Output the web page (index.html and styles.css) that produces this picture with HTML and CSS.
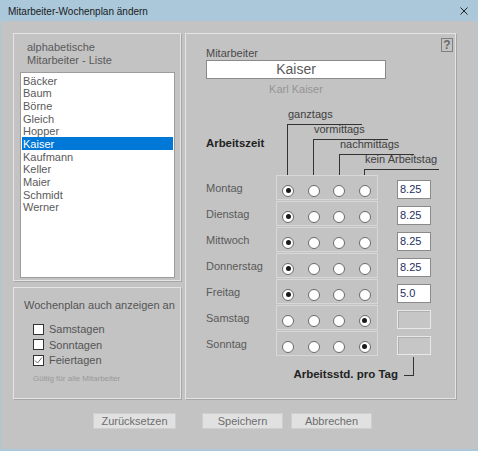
FILE: index.html
```html
<!DOCTYPE html>
<html lang="de">
<head>
<meta charset="utf-8">
<title>Mitarbeiter-Wochenplan ändern</title>
<link rel="stylesheet" href="styles.css">
</head>
<body>
<div class="window">
  <div class="titlebar">
    <span class="title">Mitarbeiter-Wochenplan ändern</span>
    <svg class="close" width="8" height="8" viewBox="0 0 8 8"><path d="M0.5 0.5L7.5 7.5M7.5 0.5L0.5 7.5" stroke="#222" stroke-width="1"/></svg>
  </div>
  <div class="client">
    <div class="main">
      <div class="leftcol">
        <div class="panel listpanel">
          <div class="listhead">alphabetische<br>Mitarbeiter - Liste</div>
          <ul class="list">
            <li>Bäcker</li>
            <li>Baum</li>
            <li>Börne</li>
            <li>Gleich</li>
            <li>Hopper</li>
            <li class="sel">Kaiser</li>
            <li>Kaufmann</li>
            <li>Keller</li>
            <li>Maier</li>
            <li>Schmidt</li>
            <li>Werner</li>
          </ul>
        </div>
        <div class="panel optpanel">
          <div class="opthead">Wochenplan auch anzeigen an</div>
          <div class="checks">
            <div class="check"><span class="box"></span><span>Samstagen</span></div>
            <div class="check"><span class="box"></span><span>Sonntagen</span></div>
            <div class="check"><span class="box checked"><svg width="9" height="9" viewBox="0 0 9 9"><path d="M1 4.5L3.5 7L8 1.5" fill="none" stroke="#6a6a6a" stroke-width="1"/></svg></span><span>Feiertagen</span></div>
          </div>
          <div class="note">Gültig für alle Mitarbeiter</div>
        </div>
      </div>
      <div class="panel rightpanel">
        <span class="help">?</span>
        <div class="emp">
          <div class="emplabel">Mitarbeiter</div>
          <div class="empbox">Kaiser</div>
          <div class="empname">Karl Kaiser</div>
        </div>
        <div class="sched">
          <div class="headrow">
            <div class="azlabel">Arbeitszeit</div>
            <div class="brackets">
              <div class="br b1"><span class="brtext">ganztags</span><span class="brline"></span></div>
              <div class="br b2"><span class="brtext">vormittags</span><span class="brline"></span></div>
              <div class="br b3"><span class="brtext">nachmittags</span><span class="brline"></span></div>
              <div class="br b4"><span class="brtext">kein Arbeitstag</span><span class="brline"></span></div>
            </div>
          </div>
          <div class="day"><span class="dname">Montag</span><span class="grp"><span class="rad on"></span><span class="rad"></span><span class="rad"></span><span class="rad"></span></span><span class="hrs">8.25</span></div>
          <div class="day"><span class="dname">Dienstag</span><span class="grp"><span class="rad on"></span><span class="rad"></span><span class="rad"></span><span class="rad"></span></span><span class="hrs">8.25</span></div>
          <div class="day"><span class="dname">Mittwoch</span><span class="grp"><span class="rad on"></span><span class="rad"></span><span class="rad"></span><span class="rad"></span></span><span class="hrs">8.25</span></div>
          <div class="day"><span class="dname">Donnerstag</span><span class="grp"><span class="rad on"></span><span class="rad"></span><span class="rad"></span><span class="rad"></span></span><span class="hrs">8.25</span></div>
          <div class="day"><span class="dname">Freitag</span><span class="grp"><span class="rad on"></span><span class="rad"></span><span class="rad"></span><span class="rad"></span></span><span class="hrs">5.0</span></div>
          <div class="day"><span class="dname">Samstag</span><span class="grp"><span class="rad"></span><span class="rad"></span><span class="rad"></span><span class="rad on"></span></span><span class="hrs off"></span></div>
          <div class="day"><span class="dname">Sonntag</span><span class="grp"><span class="rad"></span><span class="rad"></span><span class="rad"></span><span class="rad on"></span></span><span class="hrs off"></span></div>
          <div class="foot"><span class="foottext">Arbeitsstd. pro Tag</span><span class="corner"></span></div>
        </div>
      </div>
    </div>
    <div class="buttons">
      <span class="btn b-reset">Zurücksetzen</span>
      <span class="btn b-save">Speichern</span>
      <span class="btn b-cancel">Abbrechen</span>
    </div>
  </div>
</div>
</body>
</html>
```

FILE: styles.css
```css
html, body {
  margin: 0;
  padding: 0;
}
body {
  width: 478px;
  height: 451px;
  overflow: hidden;
  font-family: "Liberation Sans", Arial, sans-serif;
  font-size: 11px;
  color: #585858;
}
.window {
  width: 478px;
  height: 451px;
  box-sizing: border-box;
  border-left: 1px solid #aac8da;
  border-right: 1px solid #aac8da;
  border-bottom: 2px solid #aac8da;
  background: #c3c3c3;
  display: flex;
  flex-direction: column;
}
.titlebar {
  height: 21px;
  flex: none;
  margin: 0 -1px;
  background: #aac8da;
  display: flex;
  align-items: center;
  padding-left: 8px;
  padding-right: 10px;
  justify-content: space-between;
}
.title {
  font-size: 10px;
  color: #1a1a1a;
  padding-top: 1px;
}
.close {
  display: block;
}
.client {
  flex: 1;
  padding: 12px 0 0 12px;
}
.main {
  display: flex;
  gap: 4px;
  height: 366px;
}
.panel {
  box-sizing: border-box;
  border: 1px solid #e4e4e4;
  box-shadow: 1px 1px 0 #a6a6a6;
}
.leftcol {
  width: 168px;
  display: flex;
  flex-direction: column;
  gap: 6px;
}
.listpanel {
  height: 248px;
  padding: 7px 0 0 6px;
}
.listhead {
  line-height: 13px;
  padding-left: 7px;
  color: #5a5a5a;
}
.list {
  list-style: none;
  margin: 5px 0 0 0;
  padding: 0.5px 0 0 0;
  width: 155px;
  height: 206px;
  box-sizing: border-box;
  background: #fff;
  border: 1px solid #9c9c9c;
}
.list li {
  height: 12.7px;
  line-height: 15px;
  margin: 0 1px;
  padding-left: 1px;
  color: #5a5a5a;
  overflow: visible;
}
.list li.sel {
  background: #0078d7;
  color: #fff;
}
.optpanel {
  flex: 1;
  padding: 10.5px 0 0 10px;
}
.opthead {
  line-height: 13px;
  color: #555;
}
.checks {
  margin-top: 10px;
  padding-left: 9px;
}
.check {
  height: 15.5px;
  display: flex;
  align-items: center;
  gap: 5px;
  color: #555;
}
.box {
  width: 11px;
  height: 11px;
  box-sizing: border-box;
  background: #fff;
  border: 1px solid #333;
  display: flex;
  align-items: center;
  justify-content: center;
}
.box svg {
  display: block;
}
.note {
  margin-top: 6px;
  padding-left: 9px;
  font-size: 8px;
  line-height: 10px;
  color: #999;
}
.rightpanel {
  width: 271px;
  position: relative;
  padding: 12.5px 0 0 20px;
}
.help {
  position: absolute;
  top: 4px;
  right: 2px;
  width: 12px;
  height: 14px;
  box-sizing: border-box;
  border: 1px solid #808080;
  font-weight: bold;
  font-size: 12px;
  line-height: 12px;
  text-align: center;
  color: #6a6a6a;
}
.emp {
  width: 180px;
}
.emplabel {
  line-height: 13px;
  color: #4a4a4a;
}
.empbox {
  height: 19px;
  box-sizing: border-box;
  background: #fff;
  border: 1px solid #8a8a8a;
  font-size: 14px;
  line-height: 17px;
  text-align: center;
  color: #5a5a5a;
}
.empname {
  margin-top: 4.5px;
  line-height: 13px;
  text-align: center;
  color: #959595;
}
.sched {
  width: 225px;
  margin-top: 11.5px;
}
.headrow {
  display: flex;
  height: 67px;
}
.azlabel {
  width: 70px;
  flex: none;
  padding-top: 29.5px;
  line-height: 13px;
  font-size: 11.4px;
  font-weight: bold;
  color: #222;
}
.brackets {
  flex: 1;
  display: grid;
}
.br {
  grid-area: 1 / 1;
  display: flex;
  flex-direction: column;
  width: 75px;
}
.b1 { margin-left: 11px; margin-top: 0; }
.b2 { margin-left: 37px; margin-top: 15px; }
.b3 { margin-left: 63px; margin-top: 30px; }
.b4 { margin-left: 88px; margin-top: 45px; }
.brtext {
  line-height: 13px;
  padding: 0 0 3px 1px;
  color: #404040;
  white-space: nowrap;
}
.brline {
  flex: 1;
  border-top: 1px solid #333;
  border-left: 1px solid #333;
}
.day {
  display: flex;
  height: 25px;
  margin-bottom: 1px;
}
.dname {
  width: 70px;
  flex: none;
  padding-top: 7px;
  line-height: 13px;
  color: #5a5a5a;
}
.grp {
  width: 102px;
  flex: none;
  box-sizing: border-box;
  border: 1px solid #d8d8d8;
  display: flex;
  align-items: flex-start;
  padding: 9px 0 0 5px;
  gap: 13.67px;
}
.rad {
  width: 12px;
  height: 12px;
  box-sizing: border-box;
  border-radius: 50%;
  background: #fff;
  border: 1px solid #6a6a6a;
  display: flex;
  align-items: center;
  justify-content: center;
}
.rad.on::after {
  content: "";
  width: 5px;
  height: 5px;
  border-radius: 50%;
  background: #1a1a1a;
}
.hrs {
  width: 34px;
  height: 19px;
  margin: 5px 0 0 19px;
  box-sizing: border-box;
  background: #fff;
  border: 1px solid #8a8a8a;
  padding-left: 2px;
  line-height: 17px;
  color: #1f2f5f;
}
.hrs.off {
  background: #c6c6c6;
  border: 1px solid #e8e8e8;
  box-shadow: inset 1px 1px 0 #b0b0b0;
}
.foot {
  display: flex;
  justify-content: flex-end;
  align-items: flex-start;
}
.foottext {
  margin-top: 11.5px;
  line-height: 13px;
  font-size: 11.5px;
  font-weight: bold;
  color: #222;
}
.corner {
  width: 10px;
  height: 19px;
  box-sizing: border-box;
  margin: 0 17px 0 6px;
  border-right: 1px solid #333;
  border-bottom: 1px solid #333;
}
.buttons {
  display: flex;
  margin: 14px 0 0 80px;
}
.btn {
  height: 16px;
  box-sizing: border-box;
  background: #e1e1e1;
  border: 1px solid #cfcfcf;
  line-height: 14px;
  text-align: center;
  color: #6d6d6d;
}
.b-reset { width: 83px; }
.b-save { width: 81px; margin-left: 26px; }
.b-cancel { width: 81px; margin-left: 8px; }
```
